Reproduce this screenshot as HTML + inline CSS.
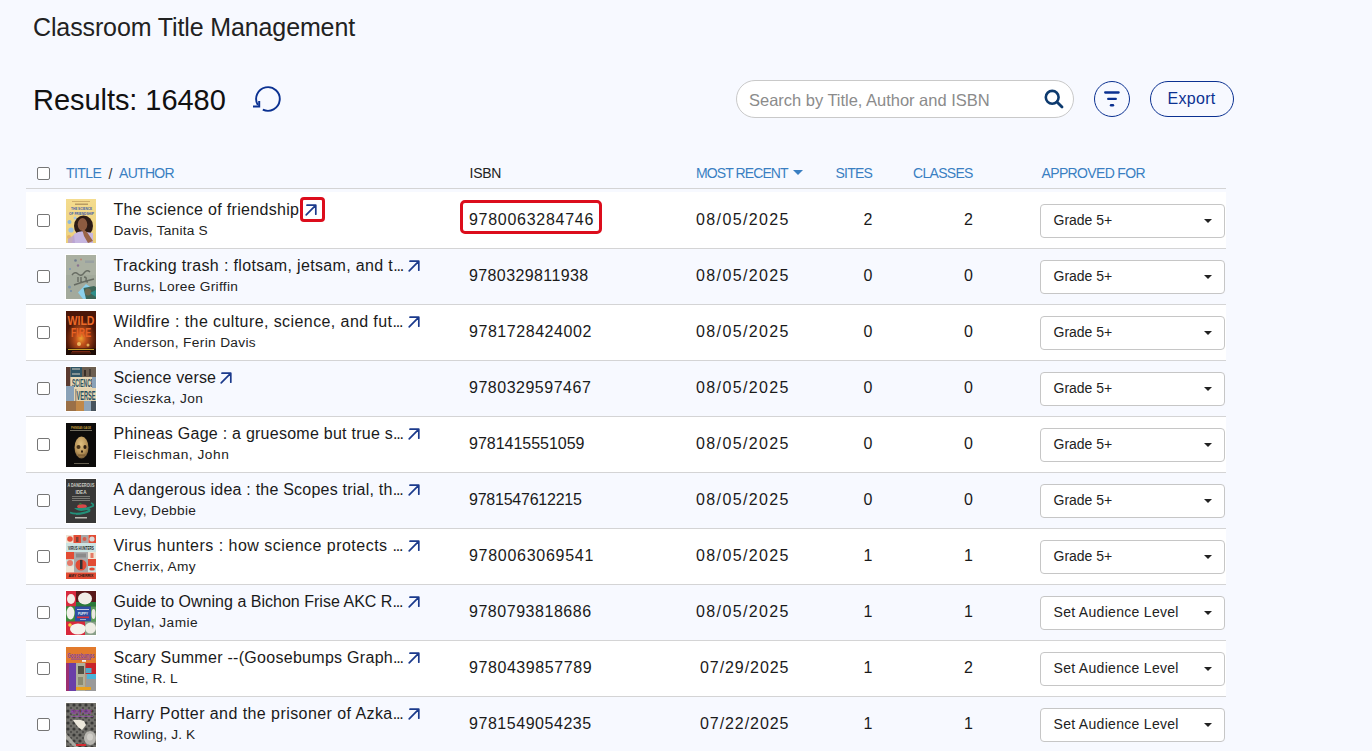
<!DOCTYPE html>
<html><head><meta charset="utf-8"><style>
html,body{margin:0;padding:0;}
body{width:1372px;height:751px;overflow:hidden;background:#f7f9ff;position:relative;font-family:"Liberation Sans",sans-serif;}
.t{position:absolute;white-space:nowrap;line-height:1;}
.box{position:absolute;box-sizing:content-box;}
.a{position:absolute;overflow:visible;}
.cb{position:absolute;width:11px;height:11px;border:1px solid #767676;border-radius:2px;background:#fff;}
.ell{letter-spacing:-1.2px;}
.cover{position:absolute;width:30px;height:44px;box-shadow:0 0 0 1px #fff;}
</style></head><body>
<div class="t" style="left:33px;top:15.34px;font-size:25px;color:#222;letter-spacing:-0.12px;">Classroom Title Management</div>
<div class="t" style="left:33px;top:86.45px;font-size:29px;color:#111;letter-spacing:-0.05px;">Results: 16480</div>
<svg class="a" style="left:249px;top:81px" width="34" height="34" viewBox="0 0 34 34">
<path d="M13.8 28.6 A11.8 11.8 0 1 0 8.8 24" fill="none" stroke="#0b3191" stroke-width="1.9"/>
<path d="M10.2 20 V25.6 H4" fill="none" stroke="#0b3191" stroke-width="2"/></svg>
<div class="box" style="left:736px;top:80px;width:336px;height:36px;border:1px solid #c9c9c9;border-radius:19px;background:#fff"></div>
<div class="t" style="left:749px;top:92.03px;font-size:16.5px;color:#8b8b8b;letter-spacing:-0.02px;">Search by Title, Author and ISBN</div>
<svg class="a" style="left:1042px;top:87px" width="24" height="24" viewBox="0 0 24 24">
<circle cx="10.2" cy="10.3" r="6.4" fill="none" stroke="#0d3a6e" stroke-width="2.6"/>
<path d="M15 15 L20 20" stroke="#0d3a6e" stroke-width="2.8" stroke-linecap="round"/></svg>
<div class="box" style="left:1094px;top:81px;width:34px;height:34px;border:1.3px solid #0b3191;border-radius:50%"></div>
<svg class="a" style="left:1094px;top:81px" width="36" height="36" viewBox="0 0 36 36">
<path d="M11.2 11.5 H24.6" stroke="#0b3191" stroke-width="2.3" stroke-linecap="round"/>
<path d="M14.2 17.9 H21.8" stroke="#0b3191" stroke-width="2.3" stroke-linecap="round"/>
<path d="M17 24.3 H19" stroke="#0b3191" stroke-width="2.4" stroke-linecap="round"/></svg>
<div class="box" style="left:1150px;top:81px;width:82px;height:34px;border:1.3px solid #0b3191;border-radius:18px"></div>
<div class="t" style="left:1167.5px;top:90.96px;font-size:16px;color:#0b3191;letter-spacing:0.3px;">Export</div>
<div class="cb" style="left:37px;top:167px"></div>
<div class="t" style="left:66px;top:166.25px;font-size:14px;color:#3a7fc2;letter-spacing:-0.55px;">TITLE</div>
<div class="t" style="left:108.5px;top:166.75px;font-size:14px;color:#333;letter-spacing:0px;">/</div>
<div class="t" style="left:119px;top:166.25px;font-size:14px;color:#3a7fc2;letter-spacing:-0.7px;">AUTHOR</div>
<div class="t" style="left:469.5px;top:166.25px;font-size:14px;color:#222;letter-spacing:-0.25px;">ISBN</div>
<div class="t" style="left:696px;top:166.25px;font-size:14px;color:#3a7fc2;letter-spacing:-0.9px;">MOST RECENT</div>
<div class="box" style="left:793px;top:170px;width:0;height:0;border-left:5px solid transparent;border-right:5px solid transparent;border-top:5.5px solid #3a7fc2"></div>
<div class="t" style="left:835.5px;top:166.25px;font-size:14px;color:#3a7fc2;letter-spacing:-0.75px;">SITES</div>
<div class="t" style="left:913px;top:166.25px;font-size:14px;color:#3a7fc2;letter-spacing:-0.7px;">CLASSES</div>
<div class="t" style="left:1041.5px;top:166.25px;font-size:14px;color:#3a7fc2;letter-spacing:-0.65px;">APPROVED FOR</div>
<div class="box" style="left:26px;top:188px;width:1200px;height:1px;background:#d4d4d5"></div>
<div class="box" style="left:26px;top:192px;width:1200px;height:56px;background:#fff"></div>
<div class="cb" style="left:37px;top:214px"></div>
<div class="cover" style="left:66px;top:199px"><svg width="30" height="44" viewBox="0 0 30 44" style="display:block"><defs><linearGradient id="g0" x1="0" y1="0" x2="0" y2="1"><stop offset="0" stop-color="#f4dc8e"/><stop offset="1" stop-color="#eccf7c"/></linearGradient></defs>
<rect width="30" height="44" fill="url(#g0)"/>
<rect x="6" y="2.2" width="18" height="0.8" fill="#b08a50" opacity=".7"/>
<rect x="9" y="4.6" width="13" height="1.2" fill="#7a5a3a" opacity=".6"/>
<text x="15.5" y="11.3" font-family="Liberation Sans" font-weight="bold" text-anchor="middle" lengthAdjust="spacingAndGlyphs" font-size="4.2" fill="#3d5aa8" textLength="21">THE SCIENCE</text>
<text x="15.5" y="15.6" font-family="Liberation Sans" font-weight="bold" text-anchor="middle" lengthAdjust="spacingAndGlyphs" font-size="4.2" fill="#3d5aa8" textLength="25">OF FRIENDSHIP</text>
<circle cx="3.5" cy="23" r="2" fill="#8db7d8"/><circle cx="5" cy="31" r="2.6" fill="#9cc0e0"/><circle cx="3" cy="38" r="2" fill="#e4b46a"/>
<circle cx="9" cy="19" r="1.5" fill="#a8c8e4"/>
<ellipse cx="17.5" cy="27" rx="9.5" ry="10.5" fill="#2c1b15"/>
<ellipse cx="16.5" cy="25.5" rx="4.8" ry="6.5" fill="#8c5b40"/>
<path d="M6 44 L8 35 Q14 31 20 33 L27 34 L27 44 Z" fill="#c6b6e0"/>
<path d="M16 30 Q20 31 23 36 L27 42 L22 44 L18 37 Z" fill="#9a6448"/>
<path d="M2 40 L8 36 L9 44 L2 44 Z" fill="#b8a0d0" opacity=".8"/></svg></div>
<div class="t" style="left:113.5px;top:202.46px;font-size:16px;color:#1a1a1a;letter-spacing:0.317px;">The science of friendship</div>
<div class="t" style="left:113.5px;top:224.40px;font-size:13.7px;color:#222;letter-spacing:0.229px;">Davis, Tanita S</div>
<div class="box" style="left:300px;top:197px;width:19px;height:19px;border:3px solid #dc0d1c;border-radius:4px"></div>
<svg class="a" style="left:304.5px;top:203.5px" width="13" height="12" viewBox="0 0 13 12"><path d="M1.2 10.8 L10.6 1.4 M2 1.2 H10.8 V10.2" fill="none" stroke="#1b3a8c" stroke-width="1.7" stroke-linecap="round" stroke-linejoin="round"/></svg>
<div class="box" style="left:460px;top:200px;width:136px;height:28px;border:3px solid #dc0d1c;border-radius:5px"></div>
<div class="t" style="left:469px;top:212.46px;font-size:16px;color:#1a1a1a;letter-spacing:0.725px;">9780063284746</div>
<div class="t" style="left:696px;top:212.46px;font-size:16px;color:#1a1a1a;letter-spacing:1.378px;">08/05/2025</div>
<div class="t" style="left:800px;top:212.46px;font-size:16px;color:#1a1a1a;letter-spacing:0px;width:72.5px;text-align:right">2</div>
<div class="t" style="left:900px;top:212.46px;font-size:16px;color:#1a1a1a;letter-spacing:0px;width:73px;text-align:right">2</div>
<div class="box" style="left:1040px;top:204px;width:183px;height:32px;border:1px solid #c6c6c6;border-radius:4px;background:#fff"></div>
<div class="t" style="left:1053.5px;top:213.15px;font-size:14px;color:#222;letter-spacing:0px;">Grade 5+</div>
<div class="box" style="left:1203.5px;top:218.5px;width:0;height:0;border-left:4.5px solid transparent;border-right:4.5px solid transparent;border-top:4.5px solid #222"></div>
<div class="box" style="left:26px;top:248px;width:1200px;height:1px;background:#d4d4d5"></div>
<div class="cb" style="left:37px;top:270px"></div>
<div class="cover" style="left:66px;top:255px"><svg width="30" height="44" viewBox="0 0 30 44" style="display:block"><rect width="30" height="44" fill="#a3aa9c"/>
<rect x="0" y="0" width="30" height="20" fill="#aab0a2"/>
<circle cx="9.5" cy="5.5" r="1.3" fill="#556688" opacity=".7"/><circle cx="15" cy="4.5" r="0.9" fill="#c07060" opacity=".8"/>
<circle cx="12" cy="10.5" r="1.2" fill="#7a5a8a" opacity=".7"/><circle cx="4" cy="14" r="1" fill="#6a8ac0" opacity=".7"/>
<rect x="19" y="5.5" width="9" height="2.5" fill="#8e98a0" opacity=".6"/>
<path d="M6 20 Q9 16 12 19 T18 18 T24 17 M12 22 L12 27 M15 22 L15 27 M18 22 Q21 22 20 25 Q19 27 22 27 M8 30 Q16 27 28 24" stroke="#5c6058" stroke-width="1.4" fill="none" opacity=".85"/>
<circle cx="3.5" cy="32" r="1.5" fill="#6a8ab0" opacity=".7"/><circle cx="5" cy="36" r="1" fill="#5a7aa8" opacity=".7"/>
<path d="M12 37.5 L20 29 L30 36 L30 44 L17 44 Z" fill="#8cd0ec"/>
<path d="M17.5 33 L28 31 L30 32 L30 44 L20 44 Z" fill="#3e6658"/>
<ellipse cx="22" cy="37" rx="3.2" ry="3.5" fill="#7a6a50" opacity=".8"/>
<path d="M24 38 L30 35 L30 42 Z" fill="#2aa0a0" opacity=".7"/></svg></div>
<div class="t" style="left:113.5px;top:258.46px;font-size:16px;color:#1a1a1a;letter-spacing:0.346px;">Tracking trash : flotsam, jetsam, and t<span class="ell">...</span></div>
<div class="t" style="left:113.5px;top:280.40px;font-size:13.7px;color:#222;letter-spacing:0.316px;">Burns, Loree Griffin</div>
<svg class="a" style="left:407.5px;top:259.5px" width="13" height="12" viewBox="0 0 13 12"><path d="M1.2 10.8 L10.6 1.4 M2 1.2 H10.8 V10.2" fill="none" stroke="#1b3a8c" stroke-width="1.7" stroke-linecap="round" stroke-linejoin="round"/></svg>
<div class="t" style="left:469px;top:268.46px;font-size:16px;color:#1a1a1a;letter-spacing:0.392px;">9780329811938</div>
<div class="t" style="left:696px;top:268.46px;font-size:16px;color:#1a1a1a;letter-spacing:1.378px;">08/05/2025</div>
<div class="t" style="left:800px;top:268.46px;font-size:16px;color:#1a1a1a;letter-spacing:0px;width:72.5px;text-align:right">0</div>
<div class="t" style="left:900px;top:268.46px;font-size:16px;color:#1a1a1a;letter-spacing:0px;width:73px;text-align:right">0</div>
<div class="box" style="left:1040px;top:260px;width:183px;height:32px;border:1px solid #c6c6c6;border-radius:4px;background:#fff"></div>
<div class="t" style="left:1053.5px;top:269.15px;font-size:14px;color:#222;letter-spacing:0px;">Grade 5+</div>
<div class="box" style="left:1203.5px;top:274.5px;width:0;height:0;border-left:4.5px solid transparent;border-right:4.5px solid transparent;border-top:4.5px solid #222"></div>
<div class="box" style="left:26px;top:305px;width:1200px;height:55px;background:#fff"></div>
<div class="box" style="left:26px;top:304px;width:1200px;height:1px;background:#d4d4d5"></div>
<div class="cb" style="left:37px;top:326px"></div>
<div class="cover" style="left:66px;top:311px"><svg width="30" height="44" viewBox="0 0 30 44" style="display:block"><defs><radialGradient id="g2" cx="0.5" cy="0.72" r="0.5"><stop offset="0" stop-color="#f0a030"/><stop offset="0.35" stop-color="#c0501a"/><stop offset="1" stop-color="#4a1608"/></radialGradient></defs>
<rect width="30" height="44" fill="#4a1a0a"/>
<rect width="30" height="38" fill="url(#g2)"/>
<text x="15" y="13.5" font-family="Liberation Sans" font-weight="bold" font-size="12.5" fill="#ec6a28" text-anchor="middle" textLength="27" lengthAdjust="spacingAndGlyphs">WILD</text>
<text x="15" y="25.5" font-family="Liberation Sans" font-weight="bold" font-size="12" fill="#e86224" text-anchor="middle" textLength="20" lengthAdjust="spacingAndGlyphs">FIRE</text>
<circle cx="13" cy="33" r="2" fill="#f8d070" opacity=".8"/><circle cx="22" cy="34" r="1.5" fill="#f8c860" opacity=".8"/>
<rect x="0" y="37.5" width="30" height="6.5" fill="#1e0c06"/>
<rect x="2" y="38" width="26" height="1" fill="#d8b030" opacity=".9"/>
<rect x="6" y="40" width="18" height="0.7" fill="#c04020" opacity=".8"/><rect x="5" y="41.6" width="20" height="0.7" fill="#c04020" opacity=".7"/></svg></div>
<div class="t" style="left:113.5px;top:314.46px;font-size:16px;color:#1a1a1a;letter-spacing:0.414px;">Wildfire : the culture, science, and fut<span class="ell">...</span></div>
<div class="t" style="left:113.5px;top:336.40px;font-size:13.7px;color:#222;letter-spacing:0.34px;">Anderson, Ferin Davis</div>
<svg class="a" style="left:407.5px;top:315.5px" width="13" height="12" viewBox="0 0 13 12"><path d="M1.2 10.8 L10.6 1.4 M2 1.2 H10.8 V10.2" fill="none" stroke="#1b3a8c" stroke-width="1.7" stroke-linecap="round" stroke-linejoin="round"/></svg>
<div class="t" style="left:469px;top:324.46px;font-size:16px;color:#1a1a1a;letter-spacing:0.55px;">9781728424002</div>
<div class="t" style="left:696px;top:324.46px;font-size:16px;color:#1a1a1a;letter-spacing:1.378px;">08/05/2025</div>
<div class="t" style="left:800px;top:324.46px;font-size:16px;color:#1a1a1a;letter-spacing:0px;width:72.5px;text-align:right">0</div>
<div class="t" style="left:900px;top:324.46px;font-size:16px;color:#1a1a1a;letter-spacing:0px;width:73px;text-align:right">0</div>
<div class="box" style="left:1040px;top:316px;width:183px;height:32px;border:1px solid #c6c6c6;border-radius:4px;background:#fff"></div>
<div class="t" style="left:1053.5px;top:325.15px;font-size:14px;color:#222;letter-spacing:0px;">Grade 5+</div>
<div class="box" style="left:1203.5px;top:330.5px;width:0;height:0;border-left:4.5px solid transparent;border-right:4.5px solid transparent;border-top:4.5px solid #222"></div>
<div class="box" style="left:26px;top:360px;width:1200px;height:1px;background:#d4d4d5"></div>
<div class="cb" style="left:37px;top:382px"></div>
<div class="cover" style="left:66px;top:367px"><svg width="30" height="44" viewBox="0 0 30 44" style="display:block"><rect width="30" height="44" fill="#d8c8a8"/>
<rect x="0" y="0" width="4.5" height="19" fill="#5a3a30"/>
<rect x="4.5" y="0" width="11.5" height="10" fill="#2f5566"/>
<rect x="6" y="1.5" width="8" height="1" fill="#d8d0c0"/><rect x="6" y="6.5" width="8" height="1" fill="#d8d0c0"/>
<rect x="16" y="0" width="14" height="10" fill="#6c5e50"/>
<rect x="18" y="3" width="2" height="6" fill="#3a3028"/><rect x="23" y="2" width="2" height="7" fill="#4a4038"/>
<rect x="4.5" y="10" width="25.5" height="11" fill="#e8d8b6"/>
<text x="17" y="19.5" font-family="Liberation Sans" font-weight="bold" font-size="10" fill="#2a5060" text-anchor="middle" textLength="22" lengthAdjust="spacingAndGlyphs">SCIENCE</text>
<rect x="0" y="19" width="8" height="15" fill="#8aa2b8"/>
<rect x="26" y="10" width="4" height="12" fill="#8aa2b8"/>
<rect x="8" y="21" width="22" height="13" fill="#e4d4b0"/>
<rect x="9" y="22" width="1.5" height="12" fill="#a09888"/>
<text x="20" y="33" font-family="Liberation Sans" font-weight="bold" font-size="12" fill="#2a5060" text-anchor="middle" textLength="19" lengthAdjust="spacingAndGlyphs">VERSE</text>
<rect x="0" y="34" width="10" height="10" fill="#9a7048"/>
<rect x="10" y="34" width="8" height="10" fill="#c08848"/>
<rect x="18" y="34" width="7" height="10" fill="#8ea4b8"/>
<rect x="25" y="34" width="5" height="10" fill="#46525c"/></svg></div>
<div class="t" style="left:113.5px;top:370.46px;font-size:16px;color:#1a1a1a;letter-spacing:0.167px;">Science verse</div>
<div class="t" style="left:113.5px;top:392.40px;font-size:13.7px;color:#222;letter-spacing:0.417px;">Scieszka, Jon</div>
<svg class="a" style="left:220px;top:371.5px" width="13" height="12" viewBox="0 0 13 12"><path d="M1.2 10.8 L10.6 1.4 M2 1.2 H10.8 V10.2" fill="none" stroke="#1b3a8c" stroke-width="1.7" stroke-linecap="round" stroke-linejoin="round"/></svg>
<div class="t" style="left:469px;top:380.46px;font-size:16px;color:#1a1a1a;letter-spacing:0.508px;">9780329597467</div>
<div class="t" style="left:696px;top:380.46px;font-size:16px;color:#1a1a1a;letter-spacing:1.378px;">08/05/2025</div>
<div class="t" style="left:800px;top:380.46px;font-size:16px;color:#1a1a1a;letter-spacing:0px;width:72.5px;text-align:right">0</div>
<div class="t" style="left:900px;top:380.46px;font-size:16px;color:#1a1a1a;letter-spacing:0px;width:73px;text-align:right">0</div>
<div class="box" style="left:1040px;top:372px;width:183px;height:32px;border:1px solid #c6c6c6;border-radius:4px;background:#fff"></div>
<div class="t" style="left:1053.5px;top:381.15px;font-size:14px;color:#222;letter-spacing:0px;">Grade 5+</div>
<div class="box" style="left:1203.5px;top:386.5px;width:0;height:0;border-left:4.5px solid transparent;border-right:4.5px solid transparent;border-top:4.5px solid #222"></div>
<div class="box" style="left:26px;top:417px;width:1200px;height:55px;background:#fff"></div>
<div class="box" style="left:26px;top:416px;width:1200px;height:1px;background:#d4d4d5"></div>
<div class="cb" style="left:37px;top:438px"></div>
<div class="cover" style="left:66px;top:423px"><svg width="30" height="44" viewBox="0 0 30 44" style="display:block"><defs><radialGradient id="g4" cx="0.45" cy="0.35" r="0.7"><stop offset="0" stop-color="#e0c080"/><stop offset="0.6" stop-color="#b89458"/><stop offset="1" stop-color="#6a5030"/></radialGradient></defs>
<rect width="30" height="44" fill="#0c0b0a"/>
<text x="15" y="5.6" font-family="Liberation Sans" font-weight="bold" text-anchor="middle" lengthAdjust="spacingAndGlyphs" font-size="3.8" fill="#c8a040" textLength="20">PHINEAS GAGE</text>
<rect x="4" y="7" width="22" height="0.9" fill="#c8c0a8" opacity=".6"/>
<ellipse cx="15.5" cy="24.5" rx="7" ry="11" fill="url(#g4)"/>
<ellipse cx="12.5" cy="24" rx="2" ry="2" fill="#4a3418"/><ellipse cx="19" cy="24" rx="1.6" ry="2" fill="#2a1c10"/>
<ellipse cx="16" cy="28.5" rx="1" ry="1.3" fill="#2a1c10"/>
<rect x="12" y="31.5" width="7" height="1.2" fill="#7a5a30"/>
<rect x="8" y="40" width="15" height="0.9" fill="#b0a890" opacity=".6"/></svg></div>
<div class="t" style="left:113.5px;top:426.46px;font-size:16px;color:#1a1a1a;letter-spacing:0.253px;">Phineas Gage : a gruesome but true s<span class="ell">...</span></div>
<div class="t" style="left:113.5px;top:448.40px;font-size:13.7px;color:#222;letter-spacing:0.533px;">Fleischman, John</div>
<svg class="a" style="left:407.5px;top:427.5px" width="13" height="12" viewBox="0 0 13 12"><path d="M1.2 10.8 L10.6 1.4 M2 1.2 H10.8 V10.2" fill="none" stroke="#1b3a8c" stroke-width="1.7" stroke-linecap="round" stroke-linejoin="round"/></svg>
<div class="t" style="left:469px;top:436.46px;font-size:16px;color:#1a1a1a;letter-spacing:-0.017px;">9781415551059</div>
<div class="t" style="left:696px;top:436.46px;font-size:16px;color:#1a1a1a;letter-spacing:1.378px;">08/05/2025</div>
<div class="t" style="left:800px;top:436.46px;font-size:16px;color:#1a1a1a;letter-spacing:0px;width:72.5px;text-align:right">0</div>
<div class="t" style="left:900px;top:436.46px;font-size:16px;color:#1a1a1a;letter-spacing:0px;width:73px;text-align:right">0</div>
<div class="box" style="left:1040px;top:428px;width:183px;height:32px;border:1px solid #c6c6c6;border-radius:4px;background:#fff"></div>
<div class="t" style="left:1053.5px;top:437.15px;font-size:14px;color:#222;letter-spacing:0px;">Grade 5+</div>
<div class="box" style="left:1203.5px;top:442.5px;width:0;height:0;border-left:4.5px solid transparent;border-right:4.5px solid transparent;border-top:4.5px solid #222"></div>
<div class="box" style="left:26px;top:472px;width:1200px;height:1px;background:#d4d4d5"></div>
<div class="cb" style="left:37px;top:494px"></div>
<div class="cover" style="left:66px;top:479px"><svg width="30" height="44" viewBox="0 0 30 44" style="display:block"><rect width="30" height="44" fill="#383838"/>
<text x="15" y="8.4" font-family="Liberation Sans" font-weight="bold" text-anchor="middle" lengthAdjust="spacingAndGlyphs" font-size="6" fill="#d0d0c8" textLength="27">A DANGEROUS</text>
<text x="15" y="14.5" font-family="Liberation Sans" font-weight="bold" text-anchor="middle" lengthAdjust="spacingAndGlyphs" font-size="6" fill="#d0d0c8" textLength="11">IDEA</text>
<rect x="6" y="17" width="18" height="0.9" fill="#b0b0a8" opacity=".6"/>
<rect x="6" y="19" width="18" height="0.9" fill="#b0b0a8" opacity=".6"/>
<rect x="6" y="21" width="18" height="0.9" fill="#b0b0a8" opacity=".6"/>
<ellipse cx="16" cy="27.5" rx="4.8" ry="2.3" fill="#d84848"/>
<path d="M13 25.5 Q14 24 15.5 25" stroke="#3a9a3a" stroke-width="1" fill="none"/>
<path d="M4 33.5 Q10 36 20 33 Q26 31 22 30 Q14 32 11 30 Q22 30 27 27 Q28 25 25 24" stroke="#23907a" stroke-width="1.8" fill="none"/>
<path d="M10 35 Q18 35 24 32" stroke="#23907a" stroke-width="1.6" fill="none"/>
<rect x="9" y="38" width="12" height="1.5" fill="#d8d8d0" opacity=".8"/></svg></div>
<div class="t" style="left:113.5px;top:482.46px;font-size:16px;color:#1a1a1a;letter-spacing:0.224px;">A dangerous idea : the Scopes trial, th<span class="ell">...</span></div>
<div class="t" style="left:113.5px;top:504.40px;font-size:13.7px;color:#222;letter-spacing:0.327px;">Levy, Debbie</div>
<svg class="a" style="left:407.5px;top:483.5px" width="13" height="12" viewBox="0 0 13 12"><path d="M1.2 10.8 L10.6 1.4 M2 1.2 H10.8 V10.2" fill="none" stroke="#1b3a8c" stroke-width="1.7" stroke-linecap="round" stroke-linejoin="round"/></svg>
<div class="t" style="left:469px;top:492.46px;font-size:16px;color:#1a1a1a;letter-spacing:-0.233px;">9781547612215</div>
<div class="t" style="left:696px;top:492.46px;font-size:16px;color:#1a1a1a;letter-spacing:1.378px;">08/05/2025</div>
<div class="t" style="left:800px;top:492.46px;font-size:16px;color:#1a1a1a;letter-spacing:0px;width:72.5px;text-align:right">0</div>
<div class="t" style="left:900px;top:492.46px;font-size:16px;color:#1a1a1a;letter-spacing:0px;width:73px;text-align:right">0</div>
<div class="box" style="left:1040px;top:484px;width:183px;height:32px;border:1px solid #c6c6c6;border-radius:4px;background:#fff"></div>
<div class="t" style="left:1053.5px;top:493.15px;font-size:14px;color:#222;letter-spacing:0px;">Grade 5+</div>
<div class="box" style="left:1203.5px;top:498.5px;width:0;height:0;border-left:4.5px solid transparent;border-right:4.5px solid transparent;border-top:4.5px solid #222"></div>
<div class="box" style="left:26px;top:529px;width:1200px;height:55px;background:#fff"></div>
<div class="box" style="left:26px;top:528px;width:1200px;height:1px;background:#d4d4d5"></div>
<div class="cb" style="left:37px;top:550px"></div>
<div class="cover" style="left:66px;top:535px"><svg width="30" height="44" viewBox="0 0 30 44" style="display:block"><rect width="30" height="44" fill="#e8e4d8"/>
<rect x="0" y="0" width="7.5" height="8" fill="#efe6d6"/><circle cx="4" cy="4" r="2.8" fill="#e4503a"/>
<rect x="7.5" y="0" width="7.5" height="8" fill="#e24c34"/><rect x="10" y="2" width="2.5" height="5" fill="#3a3a3a" opacity=".6"/>
<rect x="15" y="0" width="7.5" height="8" fill="#a8a8a8"/><circle cx="18.5" cy="4" r="2" fill="#e24c34" opacity=".8"/>
<rect x="22.5" y="0" width="7.5" height="8" fill="#e24c34"/><circle cx="26" cy="4" r="2.6" fill="#d8d8d8"/>
<rect x="0" y="8" width="30" height="9" fill="#cce4e2"/>
<text x="15" y="14.6" font-family="Liberation Sans" font-weight="bold" text-anchor="middle" lengthAdjust="spacingAndGlyphs" font-size="5.2" fill="#1a1a1a" textLength="26">VIRUS HUNTERS</text>
<rect x="0" y="17" width="8" height="7.5" fill="#e24c34"/>
<rect x="0" y="24.5" width="8" height="7" fill="#cce4e2"/><circle cx="4" cy="28" r="3" fill="#e57a6a"/>
<rect x="0" y="31.5" width="8" height="6" fill="#efe6d6"/>
<rect x="8" y="17" width="14" height="20.5" fill="#a9a9a9"/>
<rect x="10" y="18.5" width="10" height="4" fill="#8a8a8a"/>
<circle cx="15" cy="30" r="5.5" fill="#e24c34"/>
<rect x="14" y="25" width="2.5" height="9" fill="#333"/>
<rect x="22" y="17" width="8" height="7" fill="#efe6d6"/><rect x="24.5" y="18" width="3" height="5" fill="#e24c34" opacity=".7"/>
<rect x="22" y="24" width="8" height="7" fill="#e24c34"/>
<rect x="22" y="31" width="8" height="6.5" fill="#cce4e2"/><ellipse cx="26" cy="34" rx="2.8" ry="1.6" fill="#e24c34"/>
<rect x="0" y="37.5" width="30" height="6.5" fill="#e24c34"/>
<text x="15" y="42.3" font-family="Liberation Sans" font-weight="bold" text-anchor="middle" lengthAdjust="spacingAndGlyphs" font-size="3.4" fill="#1a1a1a" textLength="25">AMY CHERRIX</text></svg></div>
<div class="t" style="left:113.5px;top:538.46px;font-size:16px;color:#1a1a1a;letter-spacing:0.482px;">Virus hunters : how science protects <span class="ell">...</span></div>
<div class="t" style="left:113.5px;top:560.40px;font-size:13.7px;color:#222;letter-spacing:0.345px;">Cherrix, Amy</div>
<svg class="a" style="left:407.5px;top:539.5px" width="13" height="12" viewBox="0 0 13 12"><path d="M1.2 10.8 L10.6 1.4 M2 1.2 H10.8 V10.2" fill="none" stroke="#1b3a8c" stroke-width="1.7" stroke-linecap="round" stroke-linejoin="round"/></svg>
<div class="t" style="left:469px;top:548.46px;font-size:16px;color:#1a1a1a;letter-spacing:0.717px;">9780063069541</div>
<div class="t" style="left:696px;top:548.46px;font-size:16px;color:#1a1a1a;letter-spacing:1.378px;">08/05/2025</div>
<div class="t" style="left:800px;top:548.46px;font-size:16px;color:#1a1a1a;letter-spacing:0px;width:72.5px;text-align:right">1</div>
<div class="t" style="left:900px;top:548.46px;font-size:16px;color:#1a1a1a;letter-spacing:0px;width:73px;text-align:right">1</div>
<div class="box" style="left:1040px;top:540px;width:183px;height:32px;border:1px solid #c6c6c6;border-radius:4px;background:#fff"></div>
<div class="t" style="left:1053.5px;top:549.15px;font-size:14px;color:#222;letter-spacing:0px;">Grade 5+</div>
<div class="box" style="left:1203.5px;top:554.5px;width:0;height:0;border-left:4.5px solid transparent;border-right:4.5px solid transparent;border-top:4.5px solid #222"></div>
<div class="box" style="left:26px;top:584px;width:1200px;height:1px;background:#d4d4d5"></div>
<div class="cb" style="left:37px;top:606px"></div>
<div class="cover" style="left:66px;top:591px"><svg width="30" height="44" viewBox="0 0 30 44" style="display:block"><rect width="30" height="44" fill="#2a7a3a"/>
<rect x="0" y="0" width="10" height="15.5" fill="#d82a3e"/>
<ellipse cx="5" cy="8" rx="4" ry="5" fill="#f2efe8"/>
<rect x="10" y="0" width="20" height="15.5" fill="#5a1a1a"/>
<rect x="10" y="11" width="20" height="4.5" fill="#2a7a3a"/>
<ellipse cx="19" cy="7.5" rx="7" ry="6" fill="#f0eee6"/>
<rect x="0" y="15.5" width="9" height="15" fill="#3a8a3a"/>
<ellipse cx="4.5" cy="22" rx="4" ry="6.5" fill="#f2f0ea"/>
<rect x="9" y="15.5" width="16" height="15" fill="#2e4ea2"/>
<rect x="11" y="18" width="12" height="1" fill="#e8e8f0" opacity=".8"/>
<text x="17" y="24.2" font-family="Liberation Sans" font-weight="bold" text-anchor="middle" lengthAdjust="spacingAndGlyphs" font-size="4" fill="#f4f4f8" textLength="10">PUPPY</text>
<rect x="11" y="25.5" width="12" height="1.6" fill="#d83040"/>
<rect x="14" y="28" width="6" height="0.9" fill="#e0e0e8" opacity=".7"/>
<rect x="25" y="15.5" width="5" height="15" fill="#5a9a5a"/><ellipse cx="27.5" cy="23" rx="2" ry="5" fill="#ece8e0"/>
<rect x="0" y="30.5" width="19" height="13.5" fill="#d8283c"/>
<circle cx="4" cy="34" r="1.8" fill="#f0d040"/>
<ellipse cx="12" cy="38" rx="8" ry="5.5" fill="#f4f2ec"/>
<rect x="19" y="30.5" width="11" height="13.5" fill="#8aa08a"/>
<ellipse cx="24.5" cy="37" rx="5.5" ry="5.5" fill="#eeece4"/></svg></div>
<div class="t" style="left:113.5px;top:594.46px;font-size:16px;color:#1a1a1a;letter-spacing:0.016px;">Guide to Owning a Bichon Frise AKC R<span class="ell">...</span></div>
<div class="t" style="left:113.5px;top:616.40px;font-size:13.7px;color:#222;letter-spacing:0.455px;">Dylan, Jamie</div>
<svg class="a" style="left:407.5px;top:595.5px" width="13" height="12" viewBox="0 0 13 12"><path d="M1.2 10.8 L10.6 1.4 M2 1.2 H10.8 V10.2" fill="none" stroke="#1b3a8c" stroke-width="1.7" stroke-linecap="round" stroke-linejoin="round"/></svg>
<div class="t" style="left:469px;top:604.46px;font-size:16px;color:#1a1a1a;letter-spacing:0.533px;">9780793818686</div>
<div class="t" style="left:696px;top:604.46px;font-size:16px;color:#1a1a1a;letter-spacing:1.378px;">08/05/2025</div>
<div class="t" style="left:800px;top:604.46px;font-size:16px;color:#1a1a1a;letter-spacing:0px;width:72.5px;text-align:right">1</div>
<div class="t" style="left:900px;top:604.46px;font-size:16px;color:#1a1a1a;letter-spacing:0px;width:73px;text-align:right">1</div>
<div class="box" style="left:1040px;top:596px;width:183px;height:32px;border:1px solid #c6c6c6;border-radius:4px;background:#fff"></div>
<div class="t" style="left:1053.5px;top:605.15px;font-size:14px;color:#222;letter-spacing:0.3px;">Set Audience Level</div>
<div class="box" style="left:1203.5px;top:610.5px;width:0;height:0;border-left:4.5px solid transparent;border-right:4.5px solid transparent;border-top:4.5px solid #222"></div>
<div class="box" style="left:26px;top:641px;width:1200px;height:55px;background:#fff"></div>
<div class="box" style="left:26px;top:640px;width:1200px;height:1px;background:#d4d4d5"></div>
<div class="cb" style="left:37px;top:662px"></div>
<div class="cover" style="left:66px;top:647px"><svg width="30" height="44" viewBox="0 0 30 44" style="display:block"><rect width="30" height="44" fill="#e27a2c"/>
<text x="15" y="10.5" font-family="Liberation Sans" font-weight="bold" text-anchor="middle" lengthAdjust="spacingAndGlyphs" font-size="8" fill="#7e44a8" textLength="27">Goosebumps</text>
<rect x="5" y="11.5" width="20" height="1.2" fill="#7e44a8" opacity=".8"/>
<rect x="16" y="13" width="4" height="1.8" fill="#f0f0f0"/>
<rect x="0" y="16" width="10" height="28" fill="#6a3ea8"/>
<rect x="0" y="16" width="3" height="28" fill="#b02a5a" opacity=".7"/>
<rect x="10" y="16" width="9.5" height="28" fill="#b0b09a"/>
<rect x="12" y="19" width="6" height="8" fill="#3a3a30" opacity=".8"/>
<rect x="12" y="30" width="5" height="8" fill="#7a7a60" opacity=".7"/>
<rect x="19.5" y="16" width="10.5" height="28" fill="#9a9a9a"/>
<rect x="19.5" y="16" width="10.5" height="11" fill="#c8242a"/>
<rect x="19.5" y="21" width="6" height="5" fill="#50a8c8"/>
<rect x="21" y="27" width="9" height="5" fill="#4ab4d8"/>
<rect x="10" y="40" width="15" height="3" fill="#e8a020"/></svg></div>
<div class="t" style="left:113.5px;top:650.46px;font-size:16px;color:#1a1a1a;letter-spacing:0.288px;">Scary Summer --(Goosebumps Graph<span class="ell">...</span></div>
<div class="t" style="left:113.5px;top:672.40px;font-size:13.7px;color:#222;letter-spacing:0.02px;">Stine, R. L</div>
<svg class="a" style="left:407.5px;top:651.5px" width="13" height="12" viewBox="0 0 13 12"><path d="M1.2 10.8 L10.6 1.4 M2 1.2 H10.8 V10.2" fill="none" stroke="#1b3a8c" stroke-width="1.7" stroke-linecap="round" stroke-linejoin="round"/></svg>
<div class="t" style="left:469px;top:660.46px;font-size:16px;color:#1a1a1a;letter-spacing:0.575px;">9780439857789</div>
<div class="t" style="left:700px;top:660.46px;font-size:16px;color:#1a1a1a;letter-spacing:0.933px;">07/29/2025</div>
<div class="t" style="left:800px;top:660.46px;font-size:16px;color:#1a1a1a;letter-spacing:0px;width:72.5px;text-align:right">1</div>
<div class="t" style="left:900px;top:660.46px;font-size:16px;color:#1a1a1a;letter-spacing:0px;width:73px;text-align:right">2</div>
<div class="box" style="left:1040px;top:652px;width:183px;height:32px;border:1px solid #c6c6c6;border-radius:4px;background:#fff"></div>
<div class="t" style="left:1053.5px;top:661.15px;font-size:14px;color:#222;letter-spacing:0.3px;">Set Audience Level</div>
<div class="box" style="left:1203.5px;top:666.5px;width:0;height:0;border-left:4.5px solid transparent;border-right:4.5px solid transparent;border-top:4.5px solid #222"></div>
<div class="box" style="left:26px;top:696px;width:1200px;height:1px;background:#d4d4d5"></div>
<div class="cb" style="left:37px;top:718px"></div>
<div class="cover" style="left:66px;top:703px"><svg width="30" height="44" viewBox="0 0 30 44" style="display:block"><defs><pattern id="p9" width="6" height="6" patternUnits="userSpaceOnUse"><rect width="6" height="6" fill="#8c8a84"/><circle cx="2" cy="2" r="1.6" fill="#3a3a38"/><circle cx="5" cy="5" r="1" fill="#4a4a48"/></pattern></defs>
<rect width="30" height="44" fill="url(#p9)"/>
<rect x="0" y="0" width="30" height="44" fill="#3a3a36" opacity=".35"/>
<text x="15.5" y="11" font-family="Liberation Sans" font-weight="bold" text-anchor="middle" lengthAdjust="spacingAndGlyphs" font-size="6.5" fill="#9a3cb2" textLength="21">Harry Potter</text>
<rect x="5" y="13" width="22" height="1" fill="#a058b8" opacity=".7"/>
<path d="M7 17 Q13 16 18 18 L20 22 L16 27 L12 24 L9 20 Z" fill="#ece8dc"/>
<ellipse cx="24" cy="35" rx="6" ry="7" fill="#b8b6b0"/>
<ellipse cx="24" cy="34" rx="3" ry="3.5" fill="#d0cec8"/>
<path d="M0 30 L12 44 L8 44 L0 36 Z" fill="#d0cec6" opacity=".6"/>
<rect x="10" y="41" width="10" height="2" fill="#d42a30"/></svg></div>
<div class="t" style="left:113.5px;top:706.46px;font-size:16px;color:#1a1a1a;letter-spacing:0.431px;">Harry Potter and the prisoner of Azka<span class="ell">...</span></div>
<div class="t" style="left:113.5px;top:728.40px;font-size:13.7px;color:#222;letter-spacing:0.15px;">Rowling, J. K</div>
<svg class="a" style="left:407.5px;top:707.5px" width="13" height="12" viewBox="0 0 13 12"><path d="M1.2 10.8 L10.6 1.4 M2 1.2 H10.8 V10.2" fill="none" stroke="#1b3a8c" stroke-width="1.7" stroke-linecap="round" stroke-linejoin="round"/></svg>
<div class="t" style="left:469px;top:716.46px;font-size:16px;color:#1a1a1a;letter-spacing:0.542px;">9781549054235</div>
<div class="t" style="left:700px;top:716.46px;font-size:16px;color:#1a1a1a;letter-spacing:0.933px;">07/22/2025</div>
<div class="t" style="left:800px;top:716.46px;font-size:16px;color:#1a1a1a;letter-spacing:0px;width:72.5px;text-align:right">1</div>
<div class="t" style="left:900px;top:716.46px;font-size:16px;color:#1a1a1a;letter-spacing:0px;width:73px;text-align:right">1</div>
<div class="box" style="left:1040px;top:708px;width:183px;height:32px;border:1px solid #c6c6c6;border-radius:4px;background:#fff"></div>
<div class="t" style="left:1053.5px;top:717.15px;font-size:14px;color:#222;letter-spacing:0.3px;">Set Audience Level</div>
<div class="box" style="left:1203.5px;top:722.5px;width:0;height:0;border-left:4.5px solid transparent;border-right:4.5px solid transparent;border-top:4.5px solid #222"></div>
</body></html>
